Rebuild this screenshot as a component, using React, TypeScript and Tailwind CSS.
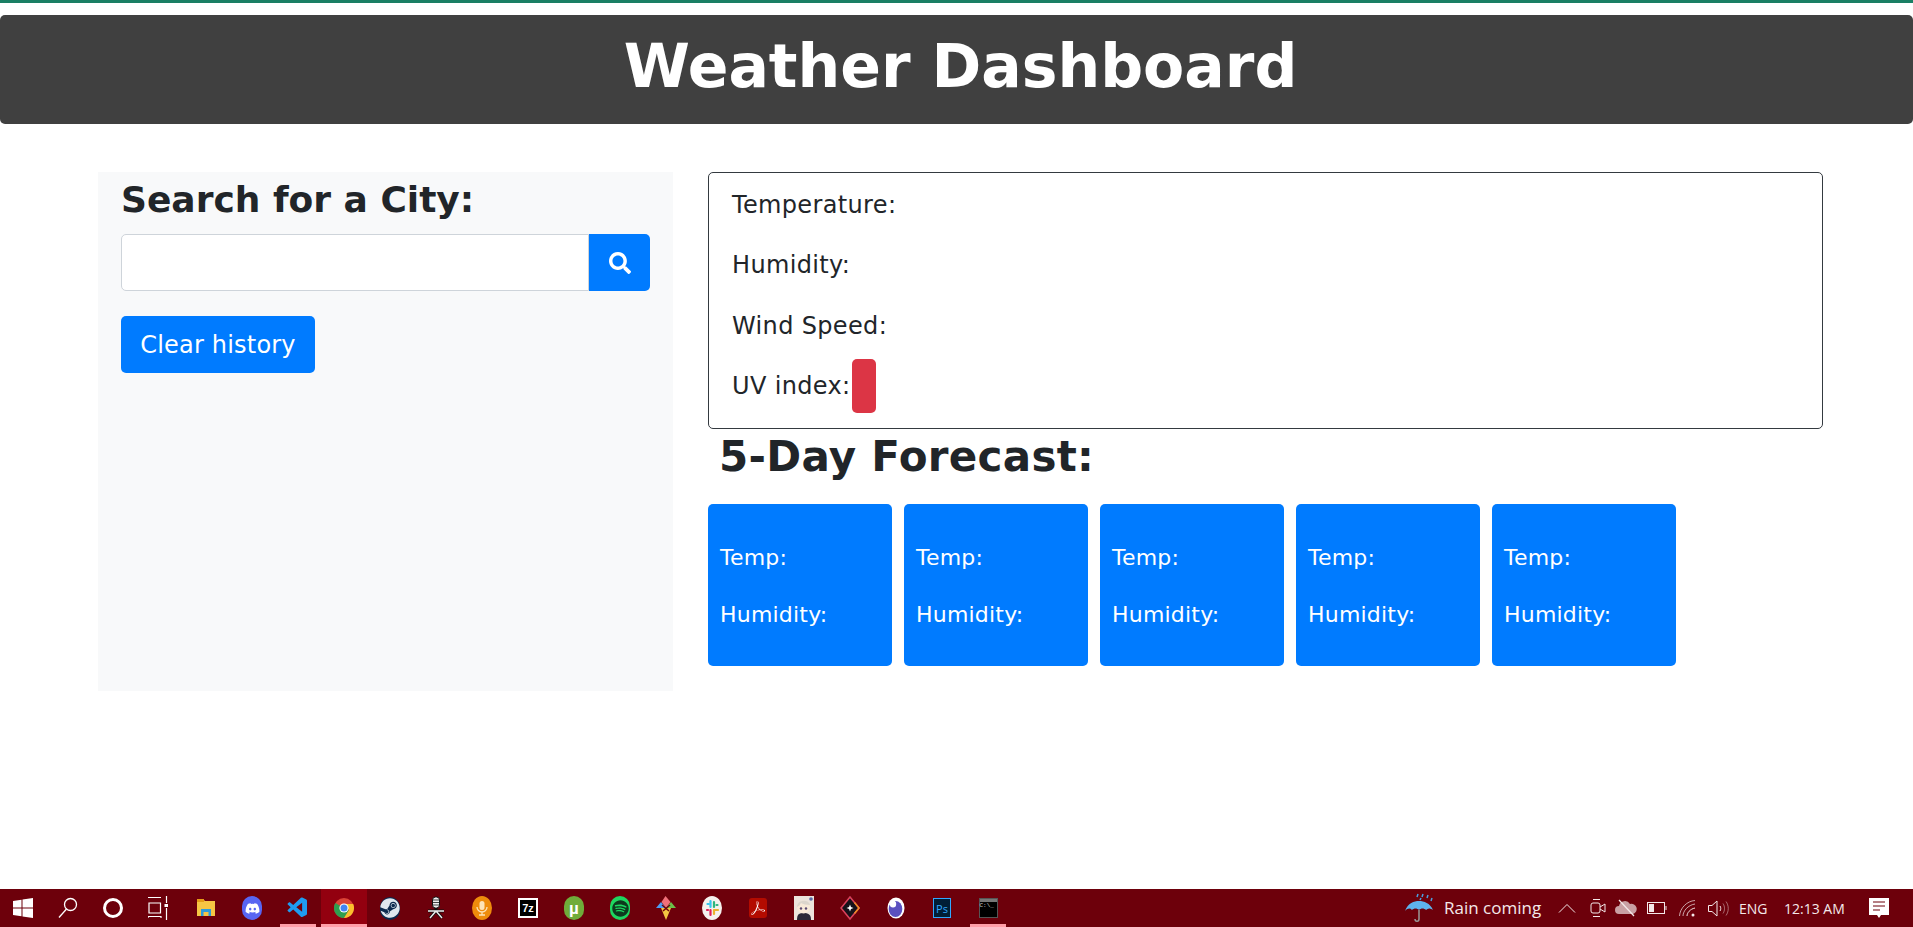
import { FaSearch, FaDiscord, FaSteam, FaSpotify } from "react-icons/fa";
import { VscVscode } from "react-icons/vsc";
import { SiAdobeacrobatreader } from "react-icons/si";
import { ReactNode } from "react";

const font = "font-['DejaVu_Sans',Verdana,sans-serif]";

function TaskIcon({ children, active, open, narrow }: { children: ReactNode; active?: boolean; open?: boolean; narrow?: boolean }) {
    return (
        <div className={`relative flex h-full items-center justify-center ${narrow ? "w-[45px]" : "w-[46px]"} ${active ? "bg-[#93000f]" : ""}`}>
            {children}
            {open && <div className={`absolute bottom-0 h-[3px] bg-[#ff9ea8] ${active ? "inset-x-0" : "inset-x-[5px]"}`} />}
        </div>
    );
}

function ForecastCard() {
    return (
        <div className="flex h-[162px] w-[184px] flex-col justify-center gap-[24px] rounded-[5px] bg-[#007bff] px-3 pt-[2px] text-[22px] leading-[33px] tracking-[0.2px] text-white">
            <p>Temp:</p>
            <p>Humidity:</p>
        </div>
    );
}

function Chrome() {
    return (
        <svg width="20" height="20" viewBox="0 0 20 20">
            <circle cx="10" cy="10" r="10" fill="#db4437" />
            <path d="M10 10 1.3 5A10 10 0 0 0 10 20l5-8z" fill="#2f9e4f" />
            <path d="M10 6h9.2A10 10 0 0 1 10 20l5-8z" fill="#fbc02d" />
            <circle cx="10" cy="10" r="4.6" fill="#fff" />
            <circle cx="10" cy="10" r="3.5" fill="#4285f4" />
        </svg>
    );
}

function Taskbar() {
    return (
        <footer className="flex h-[38px] items-center justify-between bg-[#6d000b] font-['Open_Sans',sans-serif] text-white">
            <div className="flex h-full">
                <TaskIcon narrow>
                    <svg width="20" height="20" viewBox="0 0 20 20" fill="#fff">
                        <path d="M0 3l8.5-1.2v7.7H0zM9.5 1.6 20 0v9.5H9.5zM0 10.5h8.5v7.7L0 17zM9.5 10.5H20V20L9.5 18.4z" />
                    </svg>
                </TaskIcon>
                <TaskIcon narrow>
                    <svg width="20" height="24" viewBox="0 0 20 24" fill="none" stroke="#fff" strokeWidth="1.3">
                        <circle cx="12.5" cy="8.5" r="6" />
                        <path d="M8.5 13 1 21.5" />
                    </svg>
                </TaskIcon>
                <TaskIcon narrow>
                    <div className="h-[20px] w-[20px] rounded-full border-[3px] border-white" />
                </TaskIcon>
                <TaskIcon narrow>
                    <svg width="20" height="24" viewBox="0 0 20 24" fill="none" stroke="#fff" strokeWidth="1.2">
                        <path d="M0 1.5h13M1 7h11.5v10H1zM0 22v-1.5h13V22M18.5 0v7M18.5 12v12" />
                        <rect x="16.5" y="8" width="3.5" height="3" fill="#fff" stroke="none" />
                    </svg>
                </TaskIcon>
                <div className="w-[3px]" />
                <TaskIcon>
                    <svg width="18" height="20" viewBox="0 0 18 20">
                        <path d="M0 1h6l2 2h10v15H0z" fill="#f6c544" />
                        <path d="M0 1h7v3H0z" fill="#e59c18" />
                        <path d="M4 18v-7h10v7h-2.500v-4h-5v4z" fill="#2d9cdb" />
                    </svg>
                </TaskIcon>
                <TaskIcon>
                    <div className="flex h-[24px] w-[20px] items-center justify-center rounded-full bg-[#5865f2]">
                        <FaDiscord className="text-[15px] text-white" />
                    </div>
                </TaskIcon>
                <TaskIcon open>
                    <VscVscode className="text-[24px] text-[#1f9cf0]" />
                </TaskIcon>
                <TaskIcon active open>
                    <Chrome />
                </TaskIcon>
                <TaskIcon>
                    <div className="flex h-[23px] w-[20px] items-center justify-center rounded-full bg-[#0b2a4f]">
                        <FaSteam className="text-[20px] text-[#dfe7ef]" />
                    </div>
                </TaskIcon>
                <TaskIcon>
                    <svg width="18" height="24" viewBox="0 0 18 24">
                        <rect x="5.5" y="1" width="7" height="11" rx="3" fill="#eee" stroke="#111" />
                        <path d="M6 4h6M6 6.500h6M6 9h6" stroke="#444" />
                        <path d="M9 12v3M1 15h16M9 15 3 22M9 15l6 7" stroke="#111" strokeWidth="3" />
                        <path d="M1 15h16M9 15 3 22M9 15l6 7" stroke="#eee" strokeWidth="1.400" />
                    </svg>
                </TaskIcon>
                <TaskIcon>
                    <svg width="20" height="24" viewBox="0 0 20 24">
                        <ellipse cx="10" cy="12" rx="10" ry="12" fill="#ee8c0c" />
                        <rect x="7.500" y="5" width="5" height="9" rx="2.500" fill="#fde4b8" />
                        <path d="M5 11a5 5 0 0 0 10 0M10 16v3M7 19h6" stroke="#fde4b8" strokeWidth="1.300" fill="none" />
                    </svg>
                </TaskIcon>
                <TaskIcon>
                    <div className="flex h-[20px] w-[20px] items-center justify-center border-2 border-white bg-black font-['Liberation_Sans',sans-serif] text-[11px] leading-none font-bold text-white">
                        7z
                    </div>
                </TaskIcon>
                <TaskIcon>
                    <div className="flex h-[24px] w-[20px] items-center justify-center rounded-full bg-[#6fac3a] font-['Liberation_Sans',sans-serif] text-[17px] leading-none font-bold text-white">
                        µ
                    </div>
                </TaskIcon>
                <TaskIcon>
                    <div className="flex h-[24px] w-[20px] items-center justify-center rounded-full bg-[#1ed760]">
                        <FaSpotify className="text-[17px] text-[#0d3a1e]" />
                    </div>
                </TaskIcon>
                <TaskIcon>
                    <svg width="20" height="24" viewBox="0 0 20 24">
                        <path d="M10 12 5.500 6 9.500 0l5 6z" fill="#f0707a" />
                        <path d="M10 12 0 12l5-6 5 6z" fill="#4f9cf2" />
                        <path d="M10 12h10l-5-6z" fill="#6cc04a" />
                        <path d="M5 12h10l-5 12z" fill="#f4c542" />
                        <path d="M6 9l7 6M14 9l-7 6" stroke="#6d000b" strokeWidth="1.500" />
                    </svg>
                </TaskIcon>
                <TaskIcon>
                    <svg width="20" height="24" viewBox="0 0 20 24">
                        <ellipse cx="10" cy="12" rx="10" ry="12" fill="#f6f1ee" />
                        <path d="M8.500 5v6M5.500 8h1" stroke="#36c5f0" strokeWidth="2.200" strokeLinecap="round" />
                        <path d="M12 6v5M14.500 9h1" stroke="#2eb67d" strokeWidth="2.200" strokeLinecap="round" />
                        <path d="M8.500 14v5M5 14h1" stroke="#e01e5a" strokeWidth="2.200" strokeLinecap="round" />
                        <path d="M12 14h4M12 14v4" stroke="#ecb22e" strokeWidth="2.200" strokeLinecap="round" />
                    </svg>
                </TaskIcon>
                <TaskIcon>
                    <div className="flex h-[20px] w-[18px] items-center justify-center rounded-[3px] bg-[#b30b00]">
                        <SiAdobeacrobatreader className="text-[14px] text-white" />
                    </div>
                </TaskIcon>
                <TaskIcon>
                    <svg width="20" height="24" viewBox="0 0 20 24">
                        <rect width="20" height="24" fill="#ece4dc" />
                        <path d="M3 24c0-6 2-7 7-7s7 2 7 7z" fill="#2a2838" />
                        <circle cx="9.500" cy="11" r="6.500" fill="#f8ead8" />
                        <path d="M3 11C3 3 15 3 16 9c-4 0-7-1-9-2-1 2-2 3-4 4z" fill="#dcd6cc" />
                        <circle cx="7" cy="12.500" r="1.200" fill="#5a4a70" />
                        <circle cx="12" cy="12.500" r="1.200" fill="#5a4a70" />
                        <circle cx="17" cy="3" r="1.800" fill="#5a6aa8" />
                    </svg>
                </TaskIcon>
                <TaskIcon>
                    <svg width="20" height="24" viewBox="0 0 20 24">
                        <path d="M10 0 20 12 10 24 0 12z" fill="#16121a" />
                        <path d="M10 1 19 12 10 23 1 12z" fill="none" stroke="#e0405a" strokeWidth="1.600" />
                        <path d="M14.500 6.500 19 12l-4.500 5.500" fill="none" stroke="#f08a24" strokeWidth="1.600" />
                        <path d="M10 8.500 11 11l2.500 1-2.500 1-1 2.500L9 13l-2.500-1L9 11z" fill="#fff" />
                    </svg>
                </TaskIcon>
                <TaskIcon>
                    <svg width="18" height="22" viewBox="0 0 18 22">
                        <ellipse cx="9" cy="11" rx="8.500" ry="10.500" fill="#fff" />
                        <ellipse cx="8.500" cy="12" rx="6.800" ry="8" fill="#5a50c0" />
                        <ellipse cx="6" cy="7" rx="3.200" ry="3.500" fill="#fff" />
                    </svg>
                </TaskIcon>
                <TaskIcon>
                    <div className="flex h-[20px] w-[18px] items-center justify-center border border-[#31a8ff] bg-[#001e36] font-['Open_Sans',sans-serif] text-[11px] leading-none text-[#31a8ff]">
                        Ps
                    </div>
                </TaskIcon>
                <TaskIcon open>
                    <div className="h-[20px] w-[19px] border border-[#555] bg-black">
                        <div className="h-[3px] bg-[#777]" />
                        <p className="font-['Liberation_Mono',monospace] text-[6px] leading-[8px] text-[#ccc]">C:\_</p>
                    </div>
                </TaskIcon>
            </div>
            <div className="flex h-full items-center pr-[24px] text-[#f4e8e9]">
                <svg width="32" height="30" viewBox="0 0 32 30" className="mr-[8px]">
                    <path d="M1 18C4 10 10 8 15 8s11 2 14 9c-3-2-5-2-7 0-2-2-5-2-7 0-2-2-5-2-7 0-2-2-4-2-7 1z" fill="#5eb2ec" />
                    <path d="M15 17v9c0 3-4 3-4 0" fill="none" stroke="#999" strokeWidth="1.500" />
                    <path d="M14 1l-1 3M19 1l-1 3M24 2l-1 3M28 5l-1 3M17 5l-1 2" stroke="#4b9fe0" strokeWidth="1.500" />
                </svg>
                <span className="w-[114px] text-[17px] whitespace-nowrap">Rain coming</span>
                <svg width="18" height="10" viewBox="0 0 18 10" fill="none" stroke="#f4e8e9" className="mr-[14px]">
                    <path d="M1 9.500 9 1.500l8 8" />
                </svg>
                <svg width="16" height="20" viewBox="0 0 16 20" fill="none" stroke="#f4e8e9" className="mr-[9px]">
                    <rect x="1" y="5" width="9" height="10" rx="2" />
                    <path d="M10 9l5-3v8l-5-3M3 1.500h7M3 18.500h7" />
                </svg>
                <svg width="22" height="18" viewBox="0 0 22 18" className="mr-[10px]">
                    <path d="M4 15a4 4 0 0 1 0-8 6 6 0 0 1 11-2 5 5 0 0 1 3 10z" fill="#c9a0a4" />
                    <path d="M4 1l15 16" stroke="#f4e8e9" strokeWidth="1.200" />
                </svg>
                <svg width="20" height="12" viewBox="0 0 20 12" fill="none" stroke="#f4e8e9" className="mr-[12px]">
                    <rect x="0.500" y="0.500" width="17" height="11" />
                    <rect x="2" y="2" width="5" height="8" fill="#f4e8e9" stroke="none" />
                    <path d="M19 4v4" />
                </svg>
                <svg width="17" height="17" viewBox="0 0 17 17" fill="none" stroke="#f4e8e9" className="mr-[12px]">
                    <path d="M.5 16C1 8 8 1 16 .5" opacity=".7" />
                    <path d="M4 16c0-5 5-11 12-12" opacity=".7" />
                    <path d="M8 16c0-3 3-7 8-8" />
                    <circle cx="14" cy="15" r="1.500" fill="#f4e8e9" stroke="none" />
                </svg>
                <svg width="21" height="17" viewBox="0 0 21 17" fill="none" stroke="#f4e8e9" className="mr-[10px]">
                    <path d="M.5 5.500h3.500L9 1v15l-5-4.500H.500z" />
                    <path d="M12 6c1 1.500 1 3.500 0 5" />
                    <path d="M15 3.500c2 3 2 7 0 10M18 1.500c3 4 3 10 0 14" opacity=".45" />
                </svg>
                <span className="w-[45px] text-[14px]">ENG</span>
                <span className="w-[85px] text-[14px] whitespace-nowrap">12:13 AM</span>
                <svg width="20" height="20" viewBox="0 0 20 20">
                    <path d="M0 0h20v17h-8l-2 3-2-3H0z" fill="#fff" />
                    <path d="M4 4h12M4 8h12M4 12h7" stroke="#6d000b" />
                </svg>
            </div>
        </footer>
    );
}

export default function App() {
    return (
        <div className={`flex h-[927px] flex-col overflow-hidden bg-white ${font} text-[#212529]`}>
            <div className="h-[3px] bg-[#1a7f64]" />
            <header className="mt-[12px] flex h-[109px] items-center justify-center rounded-[5px] bg-[#404040] pb-[8px] pl-[8px] text-[60px] font-bold text-white">
                Weather Dashboard
            </header>
            <main className="flex flex-1 items-start gap-[35px] pt-[48px] pl-[98px]">
                <aside className="h-[519px] w-[575px] bg-[#f8f9fa] px-[23px]">
                    <h2 className="pt-[1px] text-[36px] leading-[53px] font-bold">Search for a City:</h2>
                    <div className="mt-[8px] flex h-[57px]">
                        <input className="min-w-0 flex-1 rounded-l-[5px] border border-[#ced4da] bg-white" />
                        <button className="flex w-[61px] items-center justify-center rounded-r-[5px] bg-[#007bff] text-[22px] text-white">
                            <FaSearch />
                        </button>
                    </div>
                    <button className="mt-[25px] h-[57px] w-[194px] rounded-[5px] bg-[#007bff] text-[24px] tracking-[0.2px] text-white">
                        Clear history
                    </button>
                </aside>
                <section className="w-[1115px]">
                    <div className="h-[257px] rounded-[5px] border border-[#343a40] px-[23px] pt-[14px] text-[24px] leading-[36px] tracking-[0.35px]">
                        <p>Temperature:</p>
                        <p className="mt-[24px]">Humidity:</p>
                        <p className="mt-[25px]">Wind Speed:</p>
                        <div className="mt-[15px] flex items-center">
                            <p>UV index:</p>
                            <span className="ml-[1px] h-[54px] w-[24px] rounded-[5px] bg-[#dc3545]" />
                        </div>
                    </div>
                    <h2 className="mt-[1px] pl-[11px] text-[42px] leading-[54px] font-bold tracking-[0.3px]">5-Day Forecast:</h2>
                    <div className="mt-[20px] flex gap-[12px]">
                        <ForecastCard />
                        <ForecastCard />
                        <ForecastCard />
                        <ForecastCard />
                        <ForecastCard />
                    </div>
                </section>
            </main>
            <Taskbar />
        </div>
    );
}
